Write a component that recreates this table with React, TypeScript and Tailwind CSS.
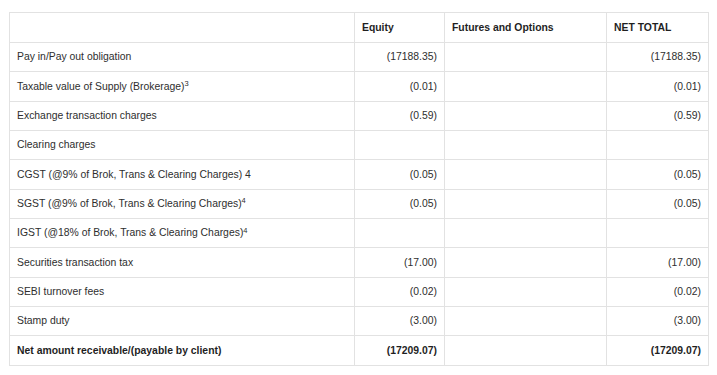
import React from 'react';

interface Row {
  label: React.ReactNode;
  equity: string;
  fno: string;
  total: string;
  bold?: boolean;
}

const Sup = ({ n }: { n: string }) => <sup className="text-[7.5px] leading-none">{n}</sup>;

const ROWS: Row[] = [
  { label: 'Pay in/Pay out obligation', equity: '(17188.35)', fno: '', total: '(17188.35)' },
  { label: <>Taxable value of Supply (Brokerage)<Sup n="3" /></>, equity: '(0.01)', fno: '', total: '(0.01)' },
  { label: 'Exchange transaction charges', equity: '(0.59)', fno: '', total: '(0.59)' },
  { label: 'Clearing charges', equity: '', fno: '', total: '' },
  { label: 'CGST (@9% of Brok, Trans & Clearing Charges) 4', equity: '(0.05)', fno: '', total: '(0.05)' },
  { label: <>SGST (@9% of Brok, Trans & Clearing Charges)<Sup n="4" /></>, equity: '(0.05)', fno: '', total: '(0.05)' },
  { label: <>IGST (@18% of Brok, Trans & Clearing Charges)<Sup n="4" /></>, equity: '', fno: '', total: '' },
  { label: 'Securities transaction tax', equity: '(17.00)', fno: '', total: '(17.00)' },
  { label: 'SEBI turnover fees', equity: '(0.02)', fno: '', total: '(0.02)' },
  { label: 'Stamp duty', equity: '(3.00)', fno: '', total: '(3.00)' },
  { label: 'Net amount receivable/(payable by client)', equity: '(17209.07)', fno: '', total: '(17209.07)', bold: true },
];

export default function App() {
  const cell = 'border border-[#e2e2e2] px-[7px] h-[29.33px] align-middle';

  return (
    <div className="min-h-screen bg-white pt-[12px] pl-[9px] font-['Liberation_Sans',Arial,sans-serif] text-[10.4px] text-[#2e2e2e]">
      <table className="table-fixed border-collapse w-[699px]">
        <colgroup>
          <col className="w-[345px]" />
          <col className="w-[90px]" />
          <col className="w-[162px]" />
          <col className="w-[102px]" />
        </colgroup>
        <thead>
          <tr>
            <th className={`${cell} h-[30px]`}></th>
            <th className={`${cell} h-[30px] text-left font-bold text-[#1f1f1f]`}>Equity</th>
            <th className={`${cell} h-[30px] text-left font-bold text-[#1f1f1f]`}>Futures and Options</th>
            <th className={`${cell} h-[30px] text-left font-bold text-[#1f1f1f]`}>NET TOTAL</th>
          </tr>
        </thead>
        <tbody>
          {ROWS.map((row, i) => (
            <tr key={i} className={row.bold ? 'font-bold text-[#1f1f1f]' : ''}>
              <td className={`${cell} text-left`}>{row.label}</td>
              <td className={`${cell} text-right`}>{row.equity}</td>
              <td className={`${cell} text-right`}>{row.fno}</td>
              <td className={`${cell} text-right`}>{row.total}</td>
            </tr>
          ))}
        </tbody>
      </table>
    </div>
  );
}
